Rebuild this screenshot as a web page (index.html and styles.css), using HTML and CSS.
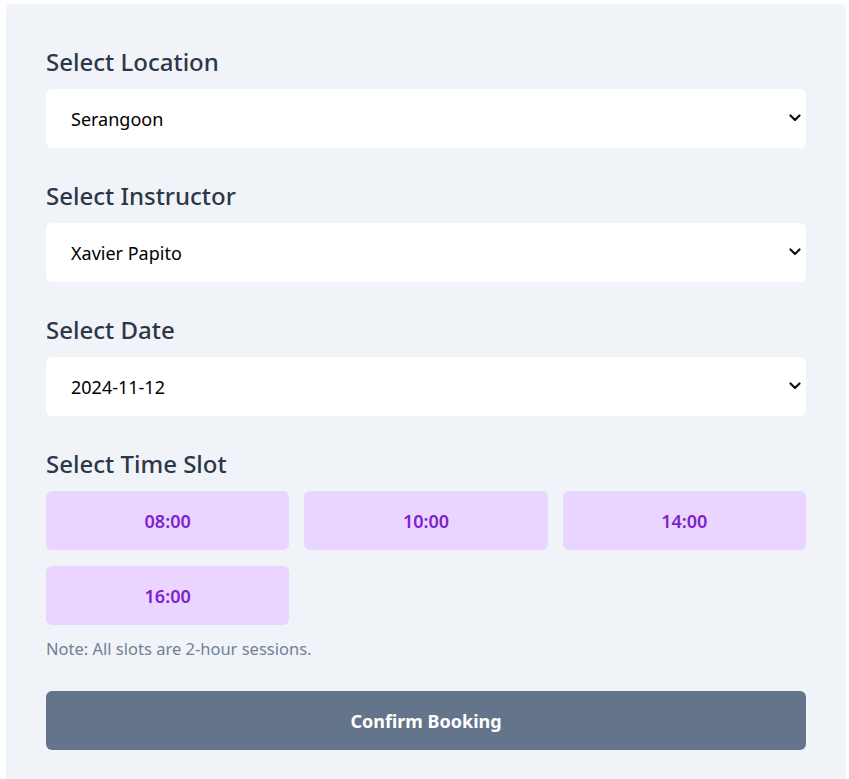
FILE: index.html
```html
<!DOCTYPE html>
<html lang="en">
<head>
<meta charset="utf-8">
<title>Booking</title>
<link rel="stylesheet" href="styles.css">
</head>
<body>
<div class="card">
  <div class="group">
    <label class="label" for="loc">Select Location</label>
    <div class="select-wrap">
      <select id="loc" class="select"><option>Serangoon</option></select>
      <svg class="chev" viewBox="0 0 12 8" width="12" height="8"><path d="M1.5 1.5 L6 6 L10.5 1.5" fill="none" stroke="#111" stroke-width="2.2" stroke-linecap="round" stroke-linejoin="round"/></svg>
    </div>
  </div>
  <div class="group">
    <label class="label" for="ins">Select Instructor</label>
    <div class="select-wrap">
      <select id="ins" class="select"><option>Xavier Papito</option></select>
      <svg class="chev" viewBox="0 0 12 8" width="12" height="8"><path d="M1.5 1.5 L6 6 L10.5 1.5" fill="none" stroke="#111" stroke-width="2.2" stroke-linecap="round" stroke-linejoin="round"/></svg>
    </div>
  </div>
  <div class="group">
    <label class="label" for="date">Select Date</label>
    <div class="select-wrap">
      <select id="date" class="select"><option>2024-11-12</option></select>
      <svg class="chev" viewBox="0 0 12 8" width="12" height="8"><path d="M1.5 1.5 L6 6 L10.5 1.5" fill="none" stroke="#111" stroke-width="2.2" stroke-linecap="round" stroke-linejoin="round"/></svg>
    </div>
  </div>
  <div class="group">
    <div class="label">Select Time Slot</div>
    <div class="slots">
      <button class="slot">08:00</button>
      <button class="slot">10:00</button>
      <button class="slot">14:00</button>
      <button class="slot">16:00</button>
    </div>
    <p class="note">Note: All slots are 2-hour sessions.</p>
  </div>
  <button class="confirm">Confirm Booking</button>
</div>
</body>
</html>
```
FILE: styles.css
```css
html, body {
  background: #ffffff;
}
body {
  margin: 4px 3px 0 6px;
  font-family: "Noto Sans", "Open Sans", sans-serif;
}
.card {
  background: #f0f4f8;
  border-radius: 8px;
  padding: 40px 40px 60px;
  box-shadow: 0 0 12px rgba(0, 0, 0, 0.08);
}
.group {
  margin-bottom: 30px;
}
.label {
  display: block;
  font-size: 24px;
  line-height: 36px;
  font-weight: 500;
  color: #2d3748;
  margin-bottom: 9px;
}
.select-wrap {
  position: relative;
}
.select {
  appearance: none;
  -webkit-appearance: none;
  width: 100%;
  height: 59px;
  border: none;
  border-radius: 6px;
  background: #ffffff;
  padding: 0 25px;
  font-family: inherit;
  font-size: 18px;
  color: #000;
  outline: none;
}
.chev {
  position: absolute;
  right: 5px;
  top: 25px;
  width: 12px;
  height: 8px;
  pointer-events: none;
}
.slots {
  display: grid;
  grid-template-columns: repeat(3, 1fr);
  column-gap: 15px;
  row-gap: 16px;
}
.slot {
  height: 59px;
  border: none;
  border-radius: 6px;
  background: #e9d5ff;
  color: #7e22ce;
  font-family: inherit;
  font-size: 18px;
  font-weight: 600;
}
.note {
  margin: 12px 0 0;
  font-size: 16.5px;
  line-height: 24px;
  color: #718096;
}
.confirm {
  display: block;
  width: 100%;
  height: 59px;
  border: none;
  border-radius: 6px;
  background: #64748b;
  color: #ffffff;
  font-family: inherit;
  font-size: 18px;
  font-weight: 700;
}
```
